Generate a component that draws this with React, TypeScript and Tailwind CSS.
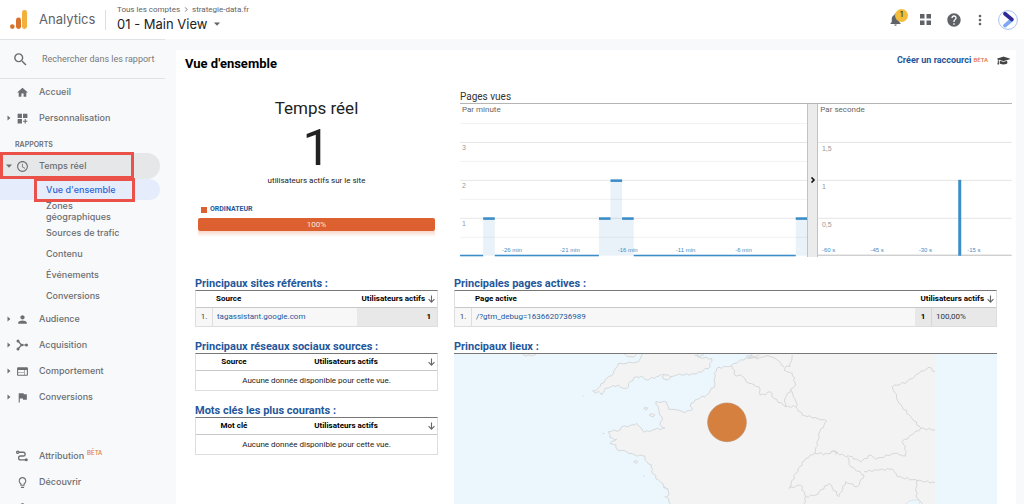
import React from 'react';
import {
  MdSearch, MdHome, MdPerson, MdFlag, MdAccessTime, MdWeb, MdLightbulbOutline,
  MdNotifications, MdHelp, MdMoreVert, MdDashboardCustomize, MdSettings,
} from 'react-icons/md';
import { FaGraduationCap } from 'react-icons/fa';

const SANS = "font-['Inter','Roboto',sans-serif]";

function Caret({ down = false }: { down?: boolean }) {
  return (
    <svg viewBox="0 0 6 6" className="size-[6px] shrink-0" fill="currentColor" aria-hidden="true">
      {down ? <path d="M0 1.5h6L3 4.8z" /> : <path d="M1.5 0.6v4.8L4.4 3z" />}
    </svg>
  );
}

function AcquisitionIcon() {
  return (
    <svg viewBox="0 0 24 24" className="size-3" fill="none" stroke="currentColor" strokeWidth="2.4" aria-hidden="true">
      <path d="M4 4l7 8-7 8M11 12h10" />
      <g fill="currentColor" stroke="none">
        <circle cx="4" cy="4" r="3" />
        <circle cx="4" cy="20" r="3" />
        <circle cx="12" cy="12" r="2.6" />
        <circle cx="21" cy="12" r="3" />
      </g>
    </svg>
  );
}

function AttributionIcon() {
  return (
    <svg viewBox="0 0 24 24" className="size-3" fill="none" stroke="currentColor" strokeWidth="2.6" aria-hidden="true">
      <circle cx="3.5" cy="4.5" r="2.3" />
      <path d="M6 4.5h8.5a3.7 3.7 0 0 1 0 7.5H9a3.8 3.8 0 0 0 0 7.6h10" />
      <circle cx="20.5" cy="19.6" r="3" fill="currentColor" stroke="none" />
    </svg>
  );
}

function NavItem({ icon, label, caret, beta }: { icon: React.ReactNode; label: string; caret?: boolean; beta?: boolean }) {
  return (
    <a href="#" className="flex h-[26px] shrink-0 items-center pl-[6px] text-[9px] font-medium text-[#6b6e72]">
      <span className="flex w-[10px]">{caret && <Caret />}</span>
      <span className="flex w-[23px]">{icon}</span>
      {label}
      {beta && <sup className="ml-[3px] text-[6px] text-[#e07a45]">BÊTA</sup>}
    </a>
  );
}

const SUB = 'flex h-[21px] shrink-0 items-center pl-[46px]';

function Sidebar() {
  return (
    <nav className={`flex w-[176px] shrink-0 flex-col overflow-hidden text-[#6b6e72] ${SANS}`}>
      <label className="mr-[11px] flex h-10 shrink-0 items-center border-y border-[#dfe2e4] pl-3">
        <MdSearch className="size-[17px]" />
        <input
          aria-label="Rechercher dans les rapports"
          placeholder="Rechercher dans les rapport"
          className="ml-[13px] w-[118px] bg-transparent pt-[2px] font-['Roboto',sans-serif] text-[9px] outline-none placeholder:text-[#77797c]"
        />
      </label>
      <NavItem icon={<MdHome className="size-[13px]" />} label="Accueil" />
      <NavItem icon={<MdDashboardCustomize className="size-[13px]" />} label="Personnalisation" caret />
      <h2 className="flex h-[22px] shrink-0 items-end pb-1 pl-[15px] text-[7px] leading-[9px] font-semibold">RAPPORTS</h2>
      <div className="relative flex h-[26px] shrink-0">
        <a href="#" className="mr-4 flex flex-1 items-center rounded-r-full bg-[#e6e7e8] pl-[6px] text-[9px] font-medium">
          <span className="flex w-[10px]"><Caret down /></span>
          <span className="flex w-[23px]"><MdAccessTime className="size-[13px]" /></span>
          Temps réel
        </a>
        <span className="absolute -top-px left-0 h-[27px] w-[134px] border-3 border-[#ea5148]" />
      </div>
      <div className="text-[9px] font-medium">
        <div className="relative flex h-[21px]">
          <a href="#" className="mr-4 flex flex-1 items-center rounded-r-full bg-[#e5edfc] pl-[46px] text-[#2f64d4]">Vue d'ensemble</a>
          <span className="absolute -top-px left-[34px] h-6 w-[101px] border-3 border-[#ea5148]" />
        </div>
        <a href="#" className="flex h-[22px] items-center pl-[46px] leading-[11px]"><span className="w-20">Zones géographiques</span></a>
        <a href="#" className={SUB}>Sources de trafic</a>
        <a href="#" className={SUB}>Contenu</a>
        <a href="#" className={SUB}>Événements</a>
        <a href="#" className={SUB}>Conversions</a>
      </div>
      <NavItem icon={<MdPerson className="size-[13px]" />} label="Audience" caret />
      <NavItem icon={<AcquisitionIcon />} label="Acquisition" caret />
      <NavItem icon={<MdWeb className="size-[13px]" />} label="Comportement" caret />
      <NavItem icon={<MdFlag className="size-[13px]" />} label="Conversions" caret />
      <div className="mt-[33px] flex flex-col">
        <NavItem icon={<AttributionIcon />} label="Attribution" beta />
        <NavItem icon={<MdLightbulbOutline className="size-[13px]" />} label="Découvrir" />
        <NavItem icon={<MdSettings className="size-[13px]" />} label="Administration" />
      </div>
    </nav>
  );
}

function Header() {
  return (
    <header className={`flex h-[39px] shrink-0 items-center bg-white pr-[6px] pl-[10px] text-[#5f6368] ${SANS}`}>
      <svg viewBox="0 0 17 19" className="h-[19px] w-[17px]" aria-hidden="true">
        <circle cx="2.3" cy="16.6" r="2.3" fill="#d9722c" />
        <rect x="6" y="7.6" width="5" height="11.4" rx="2.4" fill="#d9722c" />
        <rect x="12" y="0" width="5" height="19" rx="2.4" fill="#f2b03d" />
      </svg>
      <span className="ml-3 w-[66px] text-[13px]">Analytics</span>
      <span className="h-5 w-px bg-[#dcdfe1]" />
      <div className="ml-[11px] flex-1 pb-[2px]">
        <p className="flex items-center gap-1 font-['Roboto',sans-serif] text-[8px] leading-[10px]">
          Tous les comptes
          <svg viewBox="0 0 4 6" className="h-[5px] w-1" fill="none" stroke="currentColor" aria-hidden="true"><path d="M1 .5L3.3 3 1 5.5" /></svg>
          strategie-data.fr
        </p>
        <button type="button" className="flex items-center gap-[7px] text-[13px] leading-[18px] text-[#202124]">
          01 - Main View
          <span className="text-[#5f6368]"><Caret down /></span>
        </button>
      </div>
      <div className="flex items-center">
        <button type="button" aria-label="Notifications" className="relative mr-[17px]">
          <MdNotifications className="size-[15px]" />
          <span className="absolute -top-[3px] left-[7px] flex size-[13px] items-center justify-center rounded-full bg-[#f3bd3b] text-[7px] font-semibold text-[#3c3420]">1</span>
        </button>
        <button type="button" aria-label="Applications" className="mr-[15px]">
          <svg viewBox="0 0 11 11" className="size-[11px]" fill="currentColor" aria-hidden="true">
            <path d="M0 0h4.5v4.5H0zM6.5 0H11v4.5H6.5zM0 6.5h4.5V11H0zM6.5 6.5H11V11H6.5z" />
          </svg>
        </button>
        <button type="button" aria-label="Aide" className="mr-[10px]"><MdHelp className="size-4" /></button>
        <button type="button" aria-label="Plus" className="mr-[10px]"><MdMoreVert className="size-4" /></button>
        <button type="button" aria-label="Compte">
          <svg viewBox="0 0 20 20" className="size-5" fill="none" aria-hidden="true">
            <circle cx="10" cy="10" r="9.4" stroke="#9cbcf2" strokeWidth=".9" fill="#fff" />
            <path d="M7 15.6l6.8-5.8" stroke="#7aa7f7" strokeWidth="3.8" strokeLinecap="round" />
            <path d="M7 3.8l6.8 5.6" stroke="#2d2a98" strokeWidth="3.8" strokeLinecap="round" />
          </svg>
        </button>
      </div>
    </header>
  );
}

const STEP = 11.6;
const BARS = [{ at: 2, value: 1 }, { at: 12, value: 1 }, { at: 13, value: 2 }, { at: 14, value: 1 }, { at: 29, value: 1 }];
const IDLE = [[0, 2], [3, 12], [15, 29]];

function MinuteChart() {
  return (
    <svg viewBox="0 0 348 153" className="block h-auto w-full font-['Liberation_Sans',sans-serif]" role="img" aria-label="Pages vues par minute">
      {[19, 38, 57, 76, 95, 114, 133].map((y, i) => (
        <rect key={y} x="0" y={y} width="348" height="1" fill={i % 2 ? '#e6e6e6' : '#f1f1f1'} />
      ))}
      {BARS.map(({ at, value }) => (
        <g key={at}>
          <rect x={at * STEP} y={152 - value * 38} width={STEP} height={value * 38} fill="#3a8dc8" fillOpacity="0.11" />
          <rect x={at * STEP} y={151 - value * 38 + 0.5} width={STEP} height="2.6" fill="#3d8ec8" />
        </g>
      ))}
      {IDLE.map(([from, to]) => (
        <rect key={from} x={from * STEP} y="151" width={(to - from) * STEP} height="1.6" fill="#3d8ec8" />
      ))}
      {[3, 2, 1].map((n, i) => <text key={n} x="2" y={46 + i * 38} fontSize="7" fill="#999">{n}</text>)}
      {['-26 min', '-21 min', '-16 min', '-11 min', '-6 min'].map((t, i) => (
        <text key={t} x={52 + i * 58} y="148" fontSize="6" textAnchor="middle" fill="#3d8ec8">{t}</text>
      ))}
      <text x="342" y="148" fontSize="6" textAnchor="middle" fill="#fff">'...</text>
    </svg>
  );
}

function SecondChart() {
  return (
    <svg viewBox="0 0 194 153" className="block h-auto w-full font-['Liberation_Sans',sans-serif]" role="img" aria-label="Pages vues par seconde">
      {[38, 76, 114].map((y) => <rect key={y} x="0" y={y} width="194" height="1" fill="#e4e4e4" />)}
      <rect x="0" y="151" width="194" height="1" fill="#bcbcbc" />
      <rect x="140.5" y="76" width="3" height="76" fill="#3d8ec8" />
      {['1,5', '1', '0,5'].map((t, i) => <text key={t} x="4" y={47 + i * 38} fontSize="7" fill="#999">{t}</text>)}
      {['-60 s', '-45 s', '-30 s', '-15 s'].map((t, i) => (
        <text key={t} x={4 + i * 48.5} y="148" fontSize="6" fill="#3d8ec8">{t}</text>
      ))}
    </svg>
  );
}

function PageViews() {
  return (
    <section className="min-w-0 flex-1">
      <h3 className="pt-1 text-[10px] leading-[12px] text-[#333]">Pages vues</h3>
      <div className="flex border-t border-[#b5b5b5]">
        <div className="relative min-w-0 flex-[348]">
          <span className="absolute top-0 left-[2px] text-[8px] leading-[12px] text-[#666]">Par minute</span>
          <MinuteChart />
        </div>
        <button type="button" aria-label="Réduire" className="flex w-[11px] shrink-0 items-center justify-center border-x border-[#c2c2c2] bg-[#ebebeb]">
          <svg viewBox="0 0 6 6" className="size-[6px]" fill="none" stroke="#111" strokeWidth="1.6" aria-hidden="true"><path d="M1.5 .5L4 3 1.5 5.5" /></svg>
        </button>
        <div className="relative min-w-0 flex-[194]">
          <span className="absolute top-0 left-[2px] text-[8px] leading-[12px] text-[#666]">Par seconde</span>
          <SecondChart />
        </div>
      </div>
    </section>
  );
}

function Summary() {
  return (
    <section className="flex w-[243px] shrink-0 flex-col items-center pt-2 text-[#222]">
      <h2 className="text-[17px] leading-[26px]">Temps réel</h2>
      <p className="text-[50px] leading-[54px]">1</p>
      <p className="text-[8px] leading-[12px]">utilisateurs actifs sur le site</p>
      <div className="mt-[17px] w-full px-[3px]">
        <a href="#" className="ml-[3px] flex items-center gap-[3px] text-[7px] leading-[11px] font-bold text-[#1f579b]">
          <span className="size-[6px] bg-[#dd6030]" />ORDINATEUR
        </a>
        <div className="mt-[3px] h-[13px] rounded-[2px] bg-[#dd6030] text-center text-[8px] leading-[13px] text-[#fbe5db]">100%</div>
        <div className="h-[6px] bg-linear-to-b from-[#f6d6c9] to-white" />
      </div>
    </section>
  );
}

function SortArrow() {
  return (
    <svg viewBox="0 0 7 8" className="block h-2 w-[7px]" fill="none" stroke="#666" strokeWidth="1.1" aria-hidden="true">
      <path d="M3.5 .5v6.6M.6 4.2l2.9 3 2.9-3" />
    </svg>
  );
}

const TITLE = 'pt-[3px] text-[11px] leading-[13px] font-bold text-[#1f579b]';
const TABLE = 'w-full border-separate border-spacing-0 border border-t-[#777] border-[#dedede] text-[8px] leading-[10px]';
const TH = 'h-[17px] border-b border-[#c8c8c8] p-0 pt-px font-bold text-black';
const TD = 'p-0 pt-px';

function EmptyTable({ title, first }: { title: string; first: string }) {
  return (
    <section>
      <h3 className={TITLE}>{title}</h3>
      <table className={TABLE} aria-label={title}>
        <thead>
          <tr>
            <th className={`${TH} w-[76px]`}>{first}</th>
            <th className={`${TH} pr-2`}>Utilisateurs actifs</th>
            <th className={`${TH} w-[9px]`} aria-label="Trier"><SortArrow /></th>
          </tr>
        </thead>
        <tbody>
          <tr><td colSpan={3} className={`${TD} h-[19px] text-center text-[#222]`}>Aucune donnée disponible pour cette vue.</td></tr>
        </tbody>
      </table>
    </section>
  );
}

function ReferrersTable() {
  return (
    <section>
      <h3 className={TITLE}>Principaux sites référents :</h3>
      <table className={TABLE} aria-label="Principaux sites référents">
        <thead>
          <tr>
            <th className={`${TH} w-[17px]`} />
            <th className={`${TH} pl-[3px] text-left`}>Source</th>
            <th className={`${TH} w-[80px]`}>
              <span className="flex items-center justify-end gap-[3px] pr-[2px]">Utilisateurs actifs <SortArrow /></span>
            </th>
          </tr>
        </thead>
        <tbody>
          <tr>
            <td className={`${TD} h-[18px] border-r border-[#dedede] bg-[#f7f7f7] text-center text-[#444]`}>1.</td>
            <td className={`${TD} bg-[#f7f7f7] pl-1`}><a href="#" className="text-[#1f579b]">tagassistant.google.com</a></td>
            <td className={`${TD} bg-[#e8e8e8] pr-[6px] text-right font-bold`}>1</td>
          </tr>
        </tbody>
      </table>
    </section>
  );
}

function PagesTable() {
  return (
    <section>
      <h3 className={TITLE}>Principales pages actives :</h3>
      <table className={TABLE} aria-label="Principales pages actives">
        <thead>
          <tr>
            <th className={`${TH} w-[17px]`} />
            <th className={`${TH} pl-[3px] text-left`}>Page active</th>
            <th colSpan={2} className={TH}>
              <span className="flex items-center justify-end gap-[3px] pr-[2px]">Utilisateurs actifs <SortArrow /></span>
            </th>
          </tr>
        </thead>
        <tbody>
          <tr>
            <td className={`${TD} h-[18px] border-r border-[#dedede] bg-[#f7f7f7] text-center text-[#444]`}>1.</td>
            <td className={`${TD} bg-[#f7f7f7] pl-1`}><a href="#" className="text-[#1f579b]">/?gtm_debug=1636620736989</a></td>
            <td className={`${TD} w-[17px] border-r border-[#d6d6d6] bg-[#e8e8e8] text-center font-bold`}>1</td>
            <td className={`${TD} w-[64px] bg-[#e8e8e8] pl-1 text-[#333]`}>100,00%</td>
          </tr>
        </tbody>
      </table>
    </section>
  );
}

/** Turns "x,y x,y" anchors into a path whose segments wobble like a shoreline. */
function rough(points: string, amount: number) {
  const pts = points.trim().split(/\s+/).map((p) => p.split(',').map(Number));
  let d = `M${pts[0][0]} ${pts[0][1]}`;
  for (let i = 1; i < pts.length; i++) {
    const [x0, y0] = pts[i - 1];
    const [x1, y1] = pts[i];
    const len = Math.hypot(x1 - x0, y1 - y0);
    const n = len > 300 ? 1 : Math.max(1, Math.round(len / 8));
    for (let k = 1; k <= n; k++) {
      const t = k / n;
      const w = k === n ? 0 : Math.sin(i * 12.9 + k * 2.4) * amount;
      d += `L${(x0 + (x1 - x0) * t - ((y1 - y0) / len) * w).toFixed(1)} ${(y0 + (y1 - y0) * t + ((x1 - x0) / len) * w).toFixed(1)}`;
    }
  }
  return d;
}

const CONTINENT =
  '900,-6 885,10 860,18 833,35 788,43 781,58 783,93 758,123 723,138 708,156 716,166 693,176 668,168 643,166 638,145 606,143 616,173 625,198 618,212 633,223 603,226 571,235 560,220 548,208 528,215 503,218 498,228 463,233 468,251 488,256 468,268 486,273 488,286 518,293 543,303 573,306 578,323 593,333 593,353 613,378 638,403 645,418 638,428 653,456 1460,456 1460,-6';
const ENGLAND =
  '568,-4 560,12 553,23 518,28 493,28 478,58 453,78 433,103 416,111 425,118 434,112 443,123 453,103 493,93 508,103 518,103 528,83 548,68 568,70 578,78 608,68 630,62 643,73 668,63 728,60 768,38 773,13 738,11 723,-4';
const BORDERS = [
  '833,35 846,66 860,63 885,88 915,98 918,123 935,123 948,113 960,133 995,158 1025,158 1045,183 1090,193 1118,201 1098,233 1083,298',
  '995,158 993,133 1010,106 1018,128 1030,153 1025,158',
  '1010,106 1025,93 1015,58 990,48 995,38 1008,38 1015,3',
  '885,10 920,10 945,6 970,18 990,38',
  '1083,298 1125,300 1135,292 1180,308 1190,338 1230,363 1210,398 1175,383 1155,428 1125,388 1085,423 1055,428 1040,393 1005,403 1025,358 1055,313 1083,298',
  '1055,428 1050,450',
  '1180,303 1220,323 1250,303 1265,316 1320,298 1355,306 1358,293 1345,263 1380,238 1400,223 1443,228',
  '1400,223 1370,188 1335,148 1322,115 1315,98 1360,83 1395,58 1425,40 1443,53',
  '1230,353 1270,348 1315,345 1330,368 1390,380 1443,386',
  '1390,380 1385,403 1390,433 1405,450',
];

function WorldMap() {
  return (
    <svg viewBox="0 0 1629 453" className="block h-auto w-full bg-[#ebf6fd]" role="img" aria-label="Carte des principaux lieux">
      <g fill="#f3f3f3" stroke="#d6d9db" strokeWidth="3" strokeLinejoin="round">
        <path d={rough(CONTINENT, 3)} />
        <path d={rough(ENGLAND, 3)} />
        <path d={rough('512,0 522,8 540,9 548,0', 2)} />
        <path d="M206 0l8 6 10-3 12 3 10-6M625 68l8-6 12 2 6 6-10 8-12-3zM569 163l6-3 7 3-6 4zM586 182l8-3 9 4-5 5-9-2zM539 323l7-4 6 4-6 5zM446 239l5-1M386 125l3 1M572 367l-4-2M628 400l16 6M632 428l10 3" />
        <path d="M1350 453l18-13 22-3 6 6v10z" fill="#ebf6fd" stroke="#dde6eb" />
        <path d="M875 8l12-4 16 4 14-5M882 14l20-3 12 4M722 4l14 3 14-5M1126 300l6-8 12-2 7 6-8 6" fill="none" />
      </g>
      <g fill="none" stroke="#d6d7d8" strokeWidth="3" strokeLinejoin="round">
        {BORDERS.map((b) => <path key={b} d={rough(b, 3)} />)}
      </g>
      <rect x="1443" y="0" width="186" height="453" fill="#ebf6fd" />
      <circle cx="819" cy="205" r="58" fill="#d68040" stroke="#b98a63" strokeWidth="2" />
    </svg>
  );
}

export default function App() {
  return (
    <div className="flex h-screen flex-col overflow-hidden bg-[#f8f9fa] font-['Roboto',sans-serif]">
      <Header />
      <div className="flex min-h-0 flex-1">
        <Sidebar />
        <main className="mt-[11px] mr-2 min-w-0 flex-1 overflow-hidden bg-white">
          <div className="flex h-[26px] items-center justify-between pr-[6px] pl-[9px]">
            <h1 className="pt-px text-[13px] font-bold text-black">Vue d'ensemble</h1>
            <div className="flex items-center pb-[5px]">
              <a href="#" className="text-[9px] font-bold text-[#1f579b]">Créer un raccourci</a>
              <span className="ml-[2px] pb-[2px] text-[6px] font-medium text-[#e0703c]">BÊTA</span>
              <FaGraduationCap className="ml-[9px] size-[13px] text-[#444]" />
            </div>
          </div>
          <div className="flex gap-[22px] pt-[11px] pr-1 pl-[19px]">
            <Summary />
            <PageViews />
          </div>
          <div className="flex gap-4 px-[19px] pt-[17px]">
            <div className="flex w-[243px] shrink-0 flex-col gap-[10px]">
              <ReferrersTable />
              <EmptyTable title="Principaux réseaux sociaux sources :" first="Source" />
              <EmptyTable title="Mots clés les plus courants :" first="Mot clé" />
            </div>
            <div className="flex min-w-0 flex-1 flex-col gap-[10px]">
              <PagesTable />
              <section>
                <h3 className={`${TITLE} border-b border-[#777]`}>Principaux lieux :</h3>
                <WorldMap />
              </section>
            </div>
          </div>
        </main>
      </div>
    </div>
  );
}
